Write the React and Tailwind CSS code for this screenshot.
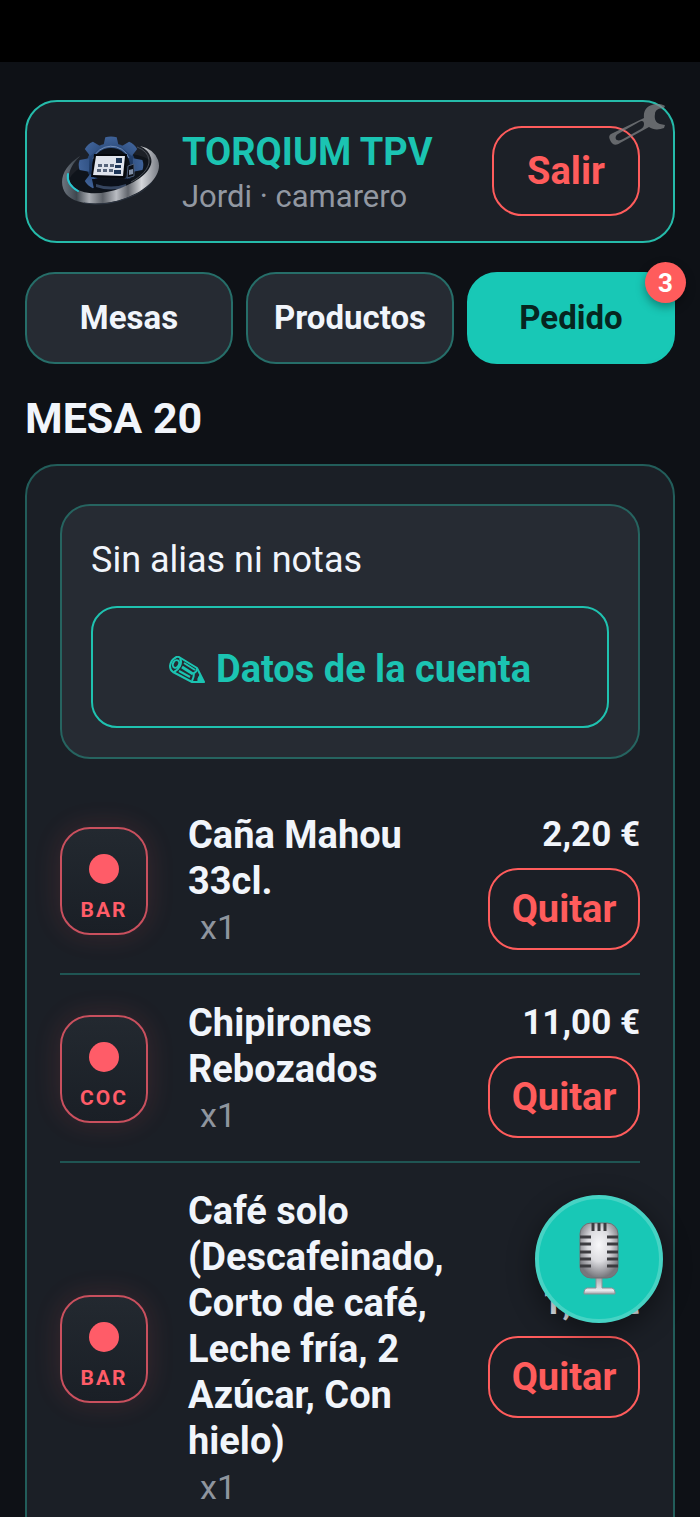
import { useState } from 'react';

const TABS = ['Mesas', 'Productos', 'Pedido'];

const INITIAL_ITEMS = [
  { id: 1, zone: 'BAR', name: 'Caña Mahou 33cl.', qty: 1, price: '2,20 €' },
  { id: 2, zone: 'COC', name: 'Chipirones Rebozados', qty: 1, price: '11,00 €' },
  {
    id: 3,
    zone: 'BAR',
    name: 'Café solo (Descafeinado, Corto de café, Leche fría, 2 Azúcar, Con hielo)',
    qty: 1,
    price: '1,50 €',
  },
];

const Logo = () => (
  <svg viewBox="0 0 100 100" className="size-[100px] shrink-0" aria-hidden="true">
    <defs>
      <linearGradient id="ring" x1="0" y1="0" x2="1" y2="0">
        <stop offset="0" stopColor="#6d757f" />
        <stop offset="0.15" stopColor="#3f474f" />
        <stop offset="0.28" stopColor="#a9adb3" />
        <stop offset="0.42" stopColor="#5b6067" />
        <stop offset="0.56" stopColor="#b9bcc2" />
        <stop offset="0.68" stopColor="#62666d" />
        <stop offset="0.82" stopColor="#d5d7db" />
        <stop offset="1" stopColor="#777b83" />
      </linearGradient>
      <linearGradient id="gear" gradientUnits="userSpaceOnUse" x1="45" y1="8" x2="55" y2="75">
        <stop offset="0" stopColor="#3f6298" />
        <stop offset="0.4" stopColor="#213f6c" />
        <stop offset="1" stopColor="#0e192b" />
      </linearGradient>
    </defs>
    <ellipse cx="51" cy="57" rx="45" ry="22" transform="rotate(-14 51 57)" fill="#0f141b" />
    <g transform="translate(51 44) scale(0.95 0.84) translate(-51 -41)" fill="url(#gear)">
      <circle cx="51" cy="41" r="26" />
      <path d="M43 18l2-10q6-2 12 0l2 10z" />
      <path d="M43 18l2-10q6-2 12 0l2 10z" transform="rotate(45 51 41)" />
      <path d="M43 18l2-10q6-2 12 0l2 10z" transform="rotate(90 51 41)" />
      <path d="M43 18l2-10q6-2 12 0l2 10z" transform="rotate(225 51 41)" />
      <path d="M43 18l2-10q6-2 12 0l2 10z" transform="rotate(270 51 41)" />
      <path d="M43 18l2-10q6-2 12 0l2 10z" transform="rotate(315 51 41)" />
    </g>
    <ellipse cx="51" cy="45" rx="19" ry="18" fill="#0d1219" />
    <path d="M33 38a19 18 0 0 1 36-1" fill="none" stroke="#8aa3c8" strokeWidth="1" opacity="0.7" />
    <path d="M32 58h40l-2 10q-18 6-36 0z" fill="#0b1019" />
    <path d="M36 63q15 5 30 0v3q-15 5-30 0z" fill="#35455f" />
    <path d="M34 33h33l-2 24-34-1z" fill="#05080d" />
    <path d="M36 35h29l-2 20-30-1z" fill="#dfe4ec" />
    <path d="M56 37h6v5h-6zM55 44h6v3h-6zM54 49h7v4h-7z" fill="#1d3657" />
    <path d="M38 43h4v3h-4zM44 43h4v3h-4zM50 43h4v3h-4zM37 48h4v3h-4zM43 48h4v3h-4zM49 48h4v3h-4z" fill="#57657a" />
    <path d="M68 45l6-2v12l-7 2z" fill="#0a0e15" stroke="#4c5d78" strokeWidth="1" />
    <path d="M69 49l4-1v5l-4 1z" fill="#8190a8" />
    <path
      d="M80 25q14 3 18 14c5 14-9 29-32 38C43 85 16 85 6 73-2 62 2 46 20 35 9 46 6 57 12 64c9 11 31 10 49 3 21-8 33-20 30-30q-2-8-11-12z"
      fill="url(#ring)"
    />
    <path d="M77 26q11 4 12 13c1 8-8 17-18 22" fill="none" stroke="#4a4f57" strokeWidth="1" />
    <path d="M8 53q-2 10 10 17" fill="none" stroke="#27c6d0" strokeWidth="2" strokeLinecap="round" />
    <path d="M24 82q23 4 46-6 14-5 22-15" fill="none" stroke="#2b3340" strokeWidth="1" />
  </svg>
);

const WrenchIcon = () => (
  <svg viewBox="0 0 58 42" className="h-[42px] w-[58px]" aria-hidden="true">
    <path
      fillRule="evenodd"
      fill="#85878a"
      d="M35 14C34 7 38 2 43 1C48 -1 53 0 56 2L55 4C50 4 46 6 46 10C45 15 47 19 51 20L56 21L55 24C50 26 44 26 40 23L11 39C7 42 3 41 1 36C-1 32 1 30 4 29ZM35 20C35 17 33 16 30 18L9 30C6 32 6 35 8 36C10 37 12 36 14 35L32 25C34 24 35 22 35 20Z"
    />
  </svg>
);

const PencilIcon = () => (
  <svg
    viewBox="0 0 37 27"
    className="h-[27px] w-[37px] shrink-0"
    fill="none"
    stroke="currentColor"
    strokeWidth="2"
    strokeLinejoin="round"
    aria-hidden="true"
  >
    <path d="M10 1l18 11 7 14H23L4 16Q1 14 1 10q1-6 5-8 2-2 4-1z" />
    <ellipse cx="7" cy="8" rx="3" ry="4" transform="rotate(25 7 8)" />
    <path d="M11 2q2 4 0 8t-6 6" />
    <path d="M15 7l11 7M10 15l11 6" />
    <path d="M13 11l11 7" strokeWidth="3" />
    <path d="M28 12q0 4-3 5 0 4-2 8" />
    <path d="M31 19l4 7h-6q-1-4 2-7z" fill="currentColor" strokeWidth="1" />
  </svg>
);

const MicIcon = () => (
  <svg viewBox="0 0 42 74" className="h-[74px] w-[42px]" aria-hidden="true">
    <defs>
      <radialGradient id="mic" cx="0.5" cy="0.4" r="0.6">
        <stop offset="0" stopColor="#f8f8fa" />
        <stop offset="0.5" stopColor="#dcdce0" />
        <stop offset="1" stopColor="#77777d" />
      </radialGradient>
      <linearGradient id="stand" x1="0" y1="0" x2="0" y2="1">
        <stop offset="0" stopColor="#a4a4a9" />
        <stop offset="0.8" stopColor="#e8e8ec" />
        <stop offset="1" stopColor="#a2a2a8" />
      </linearGradient>
    </defs>
    <path d="M18 55h6v11h10q3 1 3 4v2H6v-2q0-3 3-4h9z" fill="url(#stand)" stroke="#8b9095" strokeWidth="1" />
    <rect x="2" y="1" width="38" height="55" rx="11" fill="url(#mic)" stroke="#6f7175" strokeWidth="1" />
    <path
      d="M15 1v8M21 1v8M27 1v8M2 15h11M2 22h11M2 30h11M2 37h11M2 44h11M29 15h11M29 22h11M29 30h11M29 37h11M29 44h11"
      stroke="#3c3c40"
      strokeWidth="3"
    />
  </svg>
);

const OrderItem = ({ item, onRemove }) => (
  <li className="flex items-center gap-10 border-b-2 border-[#1f5553] pt-[25px] pb-[23px]">
    <div className="flex h-[108px] w-[88px] shrink-0 flex-col items-center justify-end gap-3.5 rounded-[30px] border-2 border-[#c9505e] bg-linear-to-b from-[#232930] to-[#1a1f26] pb-[11px] shadow-[0_0_28px_rgba(255,92,100,0.14)]">
      <span className="size-[30px] rounded-full bg-[#ff5c68]" />
      <span className="text-[21px] leading-6 font-bold tracking-[2px] text-[#ff5c68]">{item.zone}</span>
    </div>

    <div className="min-w-0 flex-1 leading-[46px]">
      <p className="text-[38px] font-bold">{item.name}</p>
      <p className="ml-3 text-[34px] text-[#8f959e]">x{item.qty}</p>
    </div>

    <div className="flex shrink-0 flex-col items-end gap-2.5">
      <span className="text-[35px] leading-[46px] font-bold">{item.price}</span>
      <button
        onClick={() => onRemove(item.id)}
        className="h-[82px] w-[152px] rounded-[30px] border-2 border-[#ff5c5c] text-[38px] font-bold text-[#ff5c5c]"
      >
        Quitar
      </button>
    </div>
  </li>
);

const App = () => {
  const [tab, setTab] = useState('Pedido');
  const [items, setItems] = useState(INITIAL_ITEMS);

  const removeItem = (id) => {
    setItems(items.filter((item) => item.id !== id));
  };

  return (
    <div className="flex h-screen flex-col bg-[#0e1116] font-['Roboto',sans-serif] text-[#f1f5fb]">
      <div className="h-[62px] shrink-0 bg-black" />

      <main className="min-h-0 flex-1 overflow-y-auto px-[25px] pt-[38px] [scrollbar-width:none]">
        <header className="relative flex items-center rounded-[32px] border-2 border-[#25bbaa] bg-[#1c2027] px-[33px] pt-[19px] pb-5">
          <Logo />
          <div className="ml-[22px] min-w-0 flex-1 pt-1">
            <h1 className="text-[38px] leading-[46px] font-bold text-[#1bc4b2]">TORQIUM TPV</h1>
            <p className="mt-0.5 text-[31px] leading-10 text-[#9298a2]">Jordi · camarero</p>
          </div>
          <button className="h-[90px] w-[148px] rounded-[30px] border-2 border-[#ff5c5c] text-[38px] font-bold text-[#ff5c5c]">
            Salir
          </button>
          <span className="absolute top-0.5 right-1.5 opacity-70">
            <WrenchIcon />
          </span>
        </header>

        <nav className="mt-[29px] grid grid-cols-3 gap-[13px]">
          {TABS.map((name) => (
            <button
              key={name}
              onClick={() => setTab(name)}
              className={`relative h-[92px] rounded-[30px] border-2 text-[33px] font-bold ${
                tab === name
                  ? 'border-[#18c8b6] bg-[#18c8b6] text-[#06251f]'
                  : 'border-[#266e69] bg-[#262b33]'
              }`}
            >
              {name}
              {name === 'Pedido' && (
                <span className="absolute -top-3 -right-[13px] flex size-[41px] items-center justify-center rounded-full bg-[#ff5c5c] text-[26px] leading-none text-white shadow-[0_4px_10px_rgba(0,0,0,0.35)]">
                  {items.length}
                </span>
              )}
            </button>
          ))}
        </nav>

        <h2 className="mt-[29px] text-[43px] leading-[50px] font-bold">MESA 20</h2>

        <section className="mt-[21px] rounded-[32px] border-2 border-[#225d5a] bg-[#1b1f26] px-[33px] pt-[38px] pb-6">
          <div className="rounded-[30px] border-2 border-[#266460] bg-[#262b33] px-[29px] pt-[31px] pb-[29px]">
            <p className="text-[36px] leading-[46px]">Sin alias ni notas</p>
            <button className="mt-[23px] flex h-[122px] w-full items-center justify-center gap-2.5 rounded-[26px] border-2 border-[#1fc2b0] pt-1 text-[38px] font-bold text-[#1bc4b2]">
              <PencilIcon />
              Datos de la cuenta
            </button>
          </div>

          <ul className="mt-7">
            {items.map((item) => (
              <OrderItem key={item.id} item={item} onRemove={removeItem} />
            ))}
          </ul>
        </section>
      </main>

      <button
        aria-label="Dictar pedido"
        className="fixed right-[37px] bottom-[194px] flex size-32 items-center justify-center rounded-full border-4 border-[#46d3c4] bg-[#18c8b6] shadow-[0_8px_28px_rgba(0,0,0,0.45)]"
      >
        <MicIcon />
      </button>
    </div>
  );
};

export default App;
